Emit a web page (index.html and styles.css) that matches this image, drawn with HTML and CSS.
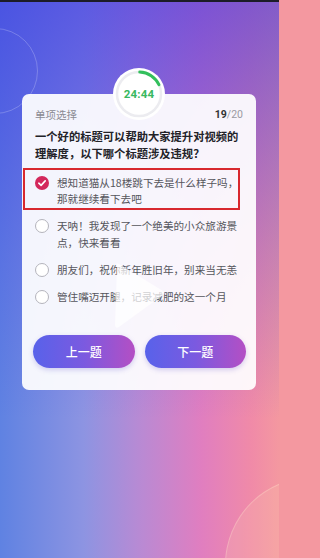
FILE: index.html
```html
<!DOCTYPE html>
<html lang="zh-CN">
<head>
<meta charset="utf-8">
<title>单项选择</title>
<link rel="stylesheet" href="styles.css">
</head>
<body>
<div class="screen">
  <div class="deco-ring"></div>
  <div class="deco-blob"></div>
  <div class="card">
    <div class="timer">
      <svg class="timer-ring" width="52" height="52" viewBox="0 0 52 52">
        <circle cx="26" cy="26" r="26" fill="#ffffff"/>
        <circle cx="26" cy="26" r="22" fill="none" stroke="#ececf0" stroke-width="2.5"/>
        <circle cx="26" cy="26" r="22" fill="none" stroke="#33bf5c" stroke-width="3" stroke-linecap="round" stroke-dasharray="24 200" transform="rotate(-88 26 26)"/>
      </svg>
      <span class="timer-text">24:44</span>
    </div>
    <div class="card-head">
      <span class="type">单项选择</span>
      <span class="count"><b>19</b>/20</span>
    </div>
    <p class="question">一个好的标题可以帮助大家提升对视频的理解度，以下哪个标题涉及违规？</p>
    <ul class="options">
      <li class="option selected">
        <span class="radio checked"><svg width="14" height="14" viewBox="0 0 14 14"><circle cx="7" cy="7" r="7" fill="#d3285c"/><path d="M3.8 7.2 L6.1 9.4 L10.2 4.9" fill="none" stroke="#fff" stroke-width="1.6" stroke-linecap="round" stroke-linejoin="round"/></svg></span>
        <span class="label">想知道猫从18楼跳下去是什么样子吗，那就继续看下去吧</span>
      </li>
      <li class="option">
        <span class="radio"></span>
        <span class="label">天呐！我发现了一个绝美的小众旅游景点，快来看看</span>
      </li>
      <li class="option">
        <span class="radio"></span>
        <span class="label">朋友们，祝你新年胜旧年，别来当无恙</span>
      </li>
      <li class="option">
        <span class="radio"></span>
        <span class="label">管住嘴迈开腿，记录减肥的这一个月</span>
      </li>
    </ul>
    <div class="actions">
      <button class="btn">上一题</button>
      <button class="btn">下一题</button>
    </div>
    <svg class="play" width="60" height="76" viewBox="0 0 60 76">
      <path d="M7 9 Q5 5 9 7 L53 34 Q56 36 53 38 L9 70 Q5 72 5 68 Z" fill="#ffffff" fill-opacity="0.72"/>
    </svg>
  </div>
</div>
</body>
</html>
```
FILE: styles.css
```css
* { box-sizing: border-box; }
html {
  margin: 0;
  padding: 0;
  background: #f498a0;
}
body {
  margin: 0;
  padding: 0;
  font-family: "Noto Sans CJK SC", "Noto Sans", sans-serif;
  width: 279px;
  height: 558px;
  overflow: hidden;
}
.screen {
  position: relative;
  width: 279px;
  height: 558px;
  overflow: hidden;
  padding: 94px 23px 0 22px;
  border-top: 2px solid #1c1c28;
  background:
    linear-gradient(to bottom, rgba(62, 56, 226, 0.62) 0%, rgba(70, 66, 226, 0.25) 45%, rgba(70, 66, 226, 0) 75%),
    linear-gradient(90deg, #5f82e2 0%, #8d94e2 30%, #b88ad4 50%, #e07ec0 72%, #f08aa8 90%, #f498a0 100%);
}
.deco-ring {
  position: absolute;
  left: -48px;
  top: 26px;
  width: 86px;
  height: 86px;
  border-radius: 50%;
  border: 1px solid rgba(255, 255, 255, 0.22);
}
.deco-blob {
  position: absolute;
  left: 225px;
  top: 475px;
  width: 176px;
  height: 176px;
  border-radius: 50%;
  background: rgba(255, 214, 180, 0.2);
  border: 1px solid rgba(255, 230, 210, 0.3);
}
.card {
  position: relative;
  width: 234px;
  margin-top: -2px;
  background: rgba(255, 255, 255, 0.93);
  border-radius: 7px;
  padding: 14px 13px 22px 13px;
}
.timer {
  position: absolute;
  top: -26px;
  left: 50%;
  margin-left: -26px;
  width: 52px;
  height: 52px;
  display: flex;
  align-items: center;
  justify-content: center;
}
.timer-ring {
  position: absolute;
  left: 0;
  top: 0;
}
.timer-text {
  position: relative;
  font-family: Roboto, "Liberation Sans", sans-serif;
  font-weight: 700;
  font-size: 11.5px;
  color: #38b860;
  letter-spacing: 0.2px;
}
.card-head {
  display: flex;
  justify-content: space-between;
  align-items: center;
  height: 14px;
  font-size: 10.5px;
  line-height: 14px;
  color: #8a8a92;
}
.count {
  font-family: Roboto, "Liberation Sans", sans-serif;
  font-size: 10.5px;
  color: #9a9aa2;
}
.count b {
  color: #333;
  font-weight: 700;
}
.question {
  margin: 5.5px 0 0 0;
  font-size: 11.3px;
  line-height: 17px;
  font-weight: 700;
  color: #222228;
}
.options {
  list-style: none;
  margin: 13px 0 0 0;
  padding: 0;
  display: flex;
  flex-direction: column;
  gap: 10.5px;
}
.option {
  position: relative;
  display: flex;
  align-items: flex-start;
  gap: 8px;
  font-size: 10.6px;
  line-height: 16.5px;
  color: #55555c;
}
.option.selected::before {
  content: "";
  position: absolute;
  left: -12px;
  right: 3px;
  top: -6.5px;
  bottom: -2.5px;
  border: 2px solid #d8282e;
}
.radio {
  flex: none;
  width: 14px;
  height: 14px;
  margin-top: 1.25px;
  border-radius: 50%;
  border: 1px solid #b4b4bc;
  background: #fff;
}
.radio.checked {
  border: none;
  background: none;
}
.radio svg { display: block; }
.label { flex: 1; }
.actions {
  display: flex;
  gap: 10px;
  margin: 30px -3px 0 -2px;
}
.btn {
  flex: 1;
  height: 33px;
  border: none;
  border-radius: 17px;
  background: linear-gradient(90deg, #5862ea 0%, #7b5ae0 50%, #b44fc4 100%);
  box-shadow: 0 2px 5px rgba(90, 80, 200, 0.25);
  color: #fff;
  font-family: "Noto Sans CJK SC", sans-serif;
  font-size: 12px;
  font-weight: 500;
  padding: 0;
}
.play {
  position: absolute;
  left: 88px;
  top: 163px;
  pointer-events: none;
}
```
